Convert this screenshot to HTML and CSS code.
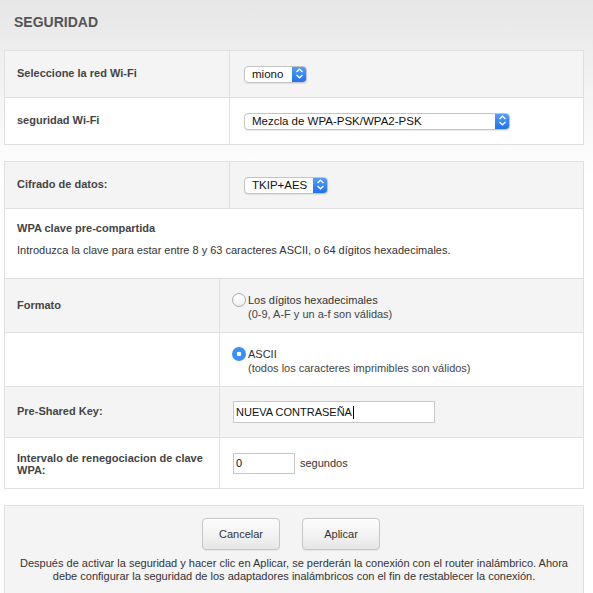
FILE: index.html
```html
<!DOCTYPE html>
<html lang="es">
<head>
<meta charset="utf-8">
<title>Seguridad</title>
<link rel="stylesheet" href="styles.css">
</head>
<body>
<div class="page">
  <h1 class="title">SEGURIDAD</h1>

  <div class="panel">
    <div class="row grey h47">
      <div class="label w225">Seleccione la red Wi-Fi</div>
      <div class="value">
        <span class="select" style="width:63px"><span class="sel-text">miono</span><span class="arrow"><svg width="9" height="11" viewBox="0 0 9 11"><path d="M1.5 4 L4.5 1.2 L7.5 4 M1.5 7 L4.5 9.8 L7.5 7" fill="none" stroke="#fff" stroke-width="1.4"/></svg></span></span>
      </div>
    </div>
    <div class="row h47">
      <div class="label w225">seguridad Wi-Fi</div>
      <div class="value">
        <span class="select" style="width:266px"><span class="sel-text">Mezcla de WPA-PSK/WPA2-PSK</span><span class="arrow"><svg width="9" height="11" viewBox="0 0 9 11"><path d="M1.5 4 L4.5 1.2 L7.5 4 M1.5 7 L4.5 9.8 L7.5 7" fill="none" stroke="#fff" stroke-width="1.4"/></svg></span></span>
      </div>
    </div>
  </div>

  <div class="panel second">
    <div class="row grey h47">
      <div class="label w225">Cifrado de datos:</div>
      <div class="value">
        <span class="select" style="width:84px"><span class="sel-text">TKIP+AES</span><span class="arrow"><svg width="9" height="11" viewBox="0 0 9 11"><path d="M1.5 4 L4.5 1.2 L7.5 4 M1.5 7 L4.5 9.8 L7.5 7" fill="none" stroke="#fff" stroke-width="1.4"/></svg></span></span>
      </div>
    </div>
    <div class="row block h70">
      <div class="block-title">WPA clave pre-compartida</div>
      <div class="block-desc">Introduzca la clave para estar entre 8 y 63 caracteres ASCII, o 64 dígitos hexadecimales.</div>
    </div>
    <div class="row grey h54">
      <div class="label w215">Formato</div>
      <div class="value radio-cell">
        <span class="radio"></span>
        <div class="radio-text"><div>Los dígitos hexadecimales</div><div class="sub">(0-9, A-F y un a-f son válidas)</div></div>
      </div>
    </div>
    <div class="row h54">
      <div class="label w215"></div>
      <div class="value radio-cell">
        <span class="radio checked"></span>
        <div class="radio-text"><div>ASCII</div><div class="sub">(todos los caracteres imprimibles son válidos)</div></div>
      </div>
    </div>
    <div class="row grey h51">
      <div class="label w215">Pre-Shared Key:</div>
      <div class="value input-cell">
        <span class="input key">NUEVA CONTRASEÑA<span class="caret"></span></span>
      </div>
    </div>
    <div class="row h51">
      <div class="label w215 two-line">Intervalo de renegociacion de clave WPA:</div>
      <div class="value input-cell">
        <span class="input short">0</span>
        <span class="unit">segundos</span>
      </div>
    </div>
  </div>

  <div class="footer">
    <div class="buttons">
      <span class="btn">Cancelar</span>
      <span class="btn">Aplicar</span>
    </div>
    <p class="note">Después de activar la seguridad y hacer clic en Aplicar, se perderán la conexión con el router inalámbrico. Ahora debe configurar la seguridad de los adaptadores inalámbricos con el fin de restablecer la conexión.</p>
  </div>
</div>
</body>
</html>
```

FILE: styles.css
```css
* { box-sizing: border-box; }
html, body { margin: 0; padding: 0; }
body {
  font-family: "Liberation Sans", Arial, Helvetica, sans-serif;
  font-size: 11px;
  color: #333;
  background: linear-gradient(to bottom, #e6e6e6 0px, #f6f6f6 110px, #ffffff 180px);
  min-height: 593px;
}
.page { padding: 0 10px 0 4px; width: 593px; }
.title {
  margin: 0;
  height: 50px;
  padding: 14px 0 0 10px;
  font-size: 14px;
  font-weight: bold;
  color: #555;
  line-height: 16px;
}
.panel {
  width: 580px;
  border: 1px solid #e0e0e0;
  border-bottom: none;
  background: #fff;
}
.panel.second { margin-top: 16px; }
.row {
  display: flex;
  border-bottom: 1px solid #e0e0e0;
  background: #fff;
}
.row.grey { background: #f4f4f4; }
.h47 { height: 47px; }
.h70 { height: 70px; }
.h54 { height: 54px; }
.h51 { height: 51px; }
.label {
  font-weight: bold;
  color: #444;
  padding-left: 12px;
  display: flex;
  align-items: center;
  border-right: 1px solid #e0e0e0;
  line-height: 12px;
  padding-bottom: 2px;
}
.w225 { width: 225px; flex: none; }
.w215 { width: 215px; flex: none; }
.label.two-line { padding-right: 4px; padding-top: 3px; }
.value {
  display: flex;
  align-items: center;
  padding-left: 14px;
  flex: 1;
}
.select {
  display: inline-flex;
  align-items: center;
  height: 17px;
  border: 1px solid #c4c4c4;
  border-radius: 4px;
  background: #fff;
  overflow: hidden;
  font-size: 11.5px;
  color: #111;
  box-shadow: 0 1px 1px rgba(0,0,0,0.08);
}
.sel-text { flex: 1; padding-left: 7px; line-height: 15px; }
.arrow {
  width: 15px;
  height: 17px;
  margin-top: -1px;
  margin-right: -1px;
  background: linear-gradient(to bottom, #5aa3fb, #1f72f0);
  display: flex;
  align-items: center;
  justify-content: center;
  border-radius: 0 4px 4px 0;
}
.block { flex-direction: column; padding: 13px 12px 0; }
.block-title { font-weight: bold; color: #444; line-height: 13px; }
.block-desc { margin-top: 9px; color: #333; line-height: 13px; }
.radio-cell { padding-left: 12px; align-items: flex-start; padding-top: 14px; }
.radio {
  width: 14px; height: 14px;
  border-radius: 50%;
  border: 1px solid #a8a8a8;
  background: linear-gradient(#fff, #f0f0f0);
  flex: none;
  margin-right: 2px;
}
.radio.checked {
  border: none;
  background: radial-gradient(circle, #fff 0, #fff 2px, #3b8ef5 2.6px);
}
.radio-text { line-height: 14px; color: #333; }
.radio-text .sub { padding-left: 0; color: #444; }
.input-cell { padding-left: 13px; }
.input {
  display: inline-flex;
  align-items: center;
  height: 22px;
  border: 1px solid #c8c8c8;
  background: #fff;
  padding-left: 2px;
  font-size: 11px;
  color: #111;
}
.input.key { width: 202px; }
.input.short { width: 62px; height: 21px; }
.caret { display: inline-block; width: 1px; height: 13px; background: #000; margin-left: 1px; }
.unit { margin-left: 5px; color: #333; }
.footer {
  width: 580px;
  margin-top: 16px;
  background: #f4f4f4;
  border: 1px solid #e0e0e0;
  border-bottom: none;
  height: 100px;
  padding-top: 12px;
}
.buttons { display: flex; justify-content: center; gap: 22px; padding-right: 6px; }
.btn {
  width: 78px; height: 32px;
  display: flex; align-items: center; justify-content: center;
  border: 1px solid #c6c6c6;
  border-radius: 4px;
  background: linear-gradient(to bottom, #fdfdfd 0%, #f3f3f3 50%, #e6e6e6 100%);
  color: #333;
  font-size: 11px;
  box-shadow: 0 1px 1px rgba(0,0,0,0.06);
}
.note {
  margin: 7px 0 0;
  text-align: center;
  line-height: 13px;
  color: #333;
  padding: 0 6px;
}
```
